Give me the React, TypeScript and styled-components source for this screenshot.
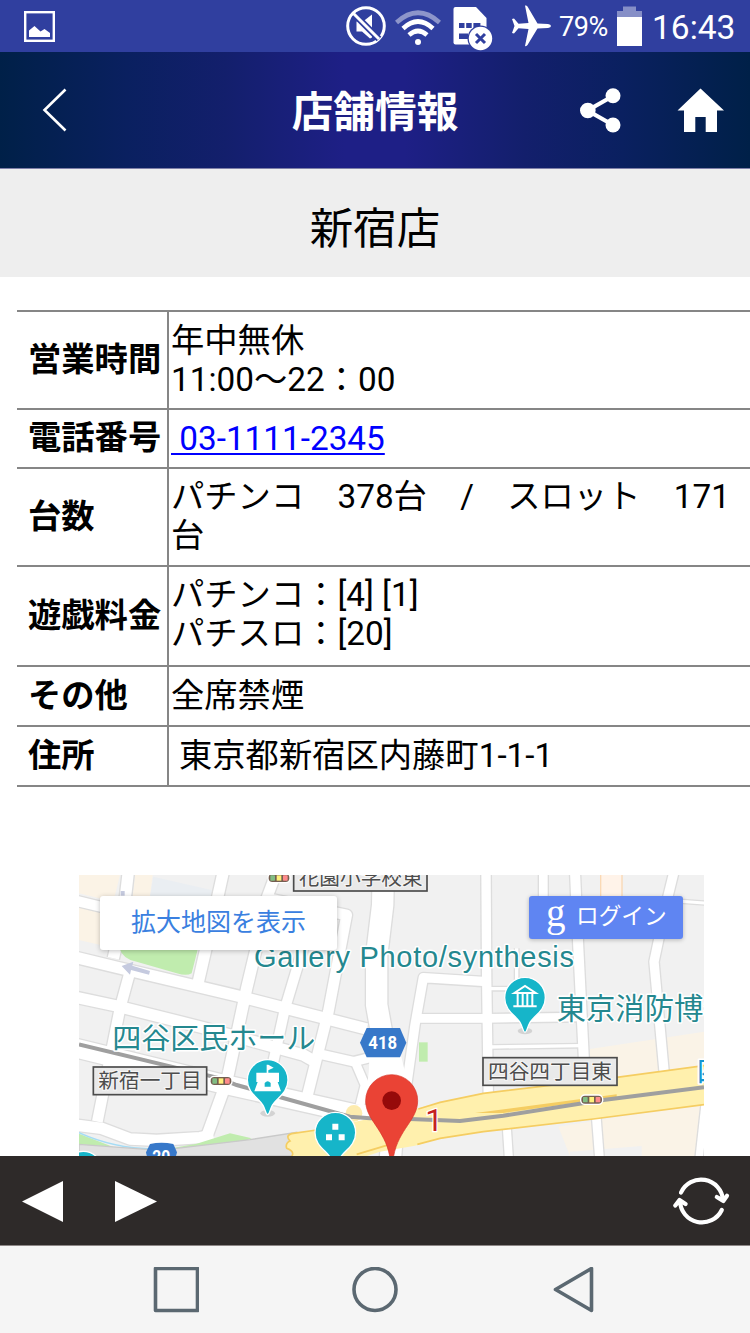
import React from 'react';
import styled, { createGlobalStyle } from 'styled-components';

const fontStack = `Roboto, "Noto Sans CJK JP", sans-serif`;

const GlobalStyle = createGlobalStyle`
  * { box-sizing: border-box; }
  body { margin: 0; background: #fff; font-family: ${fontStack}; color: #000; }
  svg { display: block; flex: none; }
`;

const Screen = styled.div`
  width: 750px;
  height: 1333px;
  display: flex;
  flex-direction: column;
  overflow: hidden;
  background: #fff;
`;

const StatusBar = styled.div`
  height: 52px;
  flex: none;
  display: flex;
  align-items: center;
  padding: 0 15px 0 24px;
  background: #303f9f;
  color: #fff;
`;

const StatusIcons = styled.div`
  margin-left: auto;
  height: 52px;
  display: flex;
  align-items: center;
`;

const IconSlot = styled.div<{ $left?: number; $top?: number }>`
  margin-left: ${(p) => p.$left ?? 0}px;
  padding-top: ${(p) => p.$top ?? 0}px;
`;

const Percent = styled.span`
  width: 57px;
  padding: 2px 0 0 7px;
  font-size: 27px;
  line-height: 40px;
  letter-spacing: -0.4px;
  white-space: nowrap;
`;

const Clock = styled.span`
  width: 83px;
  margin-left: 10px;
  padding-top: 4px;
  font-size: 33.5px;
  line-height: 40px;
  white-space: nowrap;
`;

const Header = styled.header`
  height: 117px;
  flex: none;
  display: grid;
  grid-template-columns: 200px 1fr 200px;
  align-items: center;
  border-bottom: 1px solid #7f80a8;
  background: linear-gradient(90deg, #002048 0%, #0a2060 17%, #131f6c 30%, #1e1f86 46%, #1e1f86 54%, #131f6c 70%, #0a2060 83%, #002048 100%);
  color: #fff;
`;

const HeaderTitle = styled.h1`
  margin: 0;
  padding-top: 5px;
  font-size: 41.7px;
  font-weight: 700;
  line-height: 60px;
  text-align: center;
  white-space: nowrap;
`;

const BackButton = styled.div`
  padding-left: 42px;
`;

const HeaderActions = styled.div`
  display: flex;
  align-items: center;
  gap: 55px;
  padding-left: 30px;
`;

const StoreName = styled.h2`
  margin: 0;
  height: 108px;
  flex: none;
  background: #eee;
  font-size: 43.5px;
  font-weight: 400;
  line-height: 121px;
  text-align: center;
`;

const Content = styled.main`
  flex: 1;
  min-height: 0;
  overflow: hidden;
`;

const InfoTable = styled.dl`
  margin: 33px 0 0 17px;
  border-top: 2px solid #868686;
  font-size: 33.3px;
  line-height: 39.5px;
`;

const InfoRow = styled.div<{ $height: number }>`
  height: ${(p) => p.$height}px;
  display: grid;
  grid-template-columns: 150px 1fr;
  border-bottom: 2px solid #868686;
`;

const Label = styled.dt`
  display: flex;
  align-items: center;
  padding: 0 0 1px 11px;
  font-weight: 700;
  white-space: nowrap;
`;

const Value = styled.dd<{ $indent?: boolean; $bottom?: number }>`
  margin: 0;
  display: flex;
  flex-direction: column;
  justify-content: center;
  border-left: 2px solid #868686;
  padding-left: ${(p) => (p.$indent ? 10 : 2)}px;
  padding-bottom: ${(p) => p.$bottom ?? 0}px;
  white-space: pre;
`;

const PhoneLink = styled.a`
  align-self: flex-start;
  color: #00f;
  text-decoration: underline;
  text-decoration-thickness: 2px;
  text-underline-offset: 3px;
`;

const MapFrame = styled.section`
  position: relative;
  width: 625px;
  height: 281px;
  margin: 88px 0 0 79px;
  overflow: hidden;
  background: #f1f1f1;
`;

const LargerMap = styled.div`
  position: absolute;
  left: 21px;
  top: 21px;
  width: 237px;
  height: 54px;
  border-radius: 3px;
  background: #fff;
  box-shadow: 0 1px 5px rgba(0, 0, 0, 0.25);
  color: #3a80e0;
  font-size: 25px;
  line-height: 54px;
  text-align: center;
`;

const Login = styled.div`
  position: absolute;
  left: 450px;
  top: 21px;
  width: 154px;
  height: 43px;
  display: flex;
  padding-left: 17px;
  border-radius: 3px;
  background: #5f85f2;
  box-shadow: 0 1px 4px rgba(0, 0, 0, 0.25);
  color: #fff;
  font-size: 22.7px;
  line-height: 42px;
`;

const GoogleMark = styled.span`
  width: 30px;
  font-family: "Liberation Serif", serif;
  font-size: 39px;
  line-height: 34px;
`;

const Toolbar = styled.div`
  height: 89px;
  flex: none;
  display: flex;
  align-items: center;
  padding: 1px 20px 0 22px;
  background: #2e2a29;
`;

const Forward = styled.div`
  margin-left: 52px;
  margin-right: auto;
`;

const NavBar = styled.nav`
  height: 88px;
  flex: none;
  display: flex;
  justify-content: center;
  align-items: center;
  gap: 153px;
  border-top: 1px solid #8d8786;
  background: #f5f5f5;
`;

const rows = [
  { label: '営業時間', height: 98, lines: ['年中無休', '11:00〜22：00'] },
  { label: '電話番号', height: 59, lines: [' 03-1111-2345'], link: true },
  { label: '台数', height: 98, lines: ['パチンコ　378台　/　スロット　171', '台'], bottom: 2 },
  { label: '遊戯料金', height: 100, lines: ['パチンコ：[4] [1]', 'パチスロ：[20]'], bottom: 4 },
  { label: 'その他', height: 60, lines: ['全席禁煙'], bottom: 1 },
  { label: '住所', height: 60, lines: ['東京都新宿区内藤町1-1-1'], indent: true, bottom: 1 },
];

const PictureIcon = () => (
  <svg width="31" height="31" viewBox="0 0 31 31">
    <rect x="1.2" y="1.2" width="28.6" height="28.6" fill="none" stroke="#fff" strokeWidth="2.4" />
    <path d="M5 26V19.5L10.5 15L16.5 20.5L20.5 18L26 22V26Z" fill="#fff" />
  </svg>
);

const MuteIcon = () => (
  <svg width="40" height="40" viewBox="0 0 40 40">
    <circle cx="20" cy="20" r="18.3" fill="none" stroke="#fff" strokeWidth="3" />
    <path d="M10.500 15.500H17L26 8.500V31.500L24 32.500L16 25.500H10.500Z" fill="#fff" />
    <path d="M8.500 8.500L33 33" stroke="#303f9f" strokeWidth="6.500" />
    <path d="M7 7L33 33" stroke="#fff" strokeWidth="3" />
  </svg>
);

const WifiIcon = () => (
  <svg width="46" height="36" viewBox="0 0 46 36" fill="none" stroke="#fff" strokeWidth="4.600">
    <path d="M1.500 12.500Q23 -7 44.500 12.500" opacity="0.45" />
    <path d="M8 18.500Q23 4.500 38 18.500" />
    <path d="M14 25Q23 17 32 25" />
    <circle cx="23" cy="32" r="3" fill="#fff" stroke="none" />
  </svg>
);

const SimIcon = () => (
  <svg width="40" height="46" viewBox="0 0 40 46">
    <path d="M2.500 1H23L33.500 12V38.500H2.500Q0.500 38.500 0.500 36.500V3Q0.500 1 2.500 1Z" fill="#fff" />
    <g fill="#303f9f">
      <rect x="6" y="17" width="5.500" height="5" />
      <rect x="13.200" y="17" width="5.500" height="5" />
      <rect x="20.400" y="17" width="7" height="5" />
      <rect x="6" y="24" width="13" height="2" opacity="0" />
      <rect x="6" y="27.500" width="9" height="5.500" />
    </g>
    <circle cx="27.500" cy="32.500" r="13" fill="#303f9f" />
    <circle cx="27.500" cy="32.500" r="11.700" fill="#fff" />
    <path d="M23 28L32 37M32 28L23 37" stroke="#303f9f" strokeWidth="3" />
  </svg>
);

const PlaneIcon = () => (
  <svg width="40" height="42" viewBox="0 0 40 42">
    <path d="M13 0.500Q14.500 0 15.500 1.500L25.500 18.500L36 19Q39 19.500 39 21Q39 22.500 36 23L25.500 23.500L15.500 40Q14.500 41.500 13 41L16.500 24L6.500 23.200L2 28.500L0 28L2.500 21L0 14L2 13.500L6.500 18.800L16.500 18Z" fill="#fff" />
  </svg>
);

const BatteryIcon = () => (
  <svg width="25" height="40" viewBox="0 0 25 40">
    <path d="M0 11V5H6V0.500H19V5H25V11Z" fill="#fff" opacity="0.42" />
    <rect y="11" width="25" height="29" fill="#fff" />
  </svg>
);

const BackIcon = () => (
  <svg width="26" height="44" viewBox="0 0 26 44">
    <path d="M23.500 1.500L2.500 22L23.500 42.500" fill="none" stroke="#fff" strokeWidth="2.600" />
  </svg>
);

const ShareIcon = () => (
  <svg width="41" height="45" viewBox="0 0 41 45">
    <path d="M33 8L7.500 22.500L33 37" fill="none" stroke="#fff" strokeWidth="4.200" />
    <g fill="#fff">
      <circle cx="33" cy="7.800" r="7.500" />
      <circle cx="7.800" cy="22.500" r="7.800" />
      <circle cx="33" cy="37" r="7.500" />
    </g>
  </svg>
);

const HomeIcon = () => (
  <svg width="48" height="45" viewBox="0 0 48 45">
    <path d="M24.500 0.500L48 22.500H41V44H29.700V29H19.300V44H8V22.500H1.500Z" fill="#fff" />
  </svg>
);

const ReloadIcon = () => (
  <svg width="57" height="50" viewBox="0 0 57 50" fill="none" stroke="#fff" strokeWidth="4.200" strokeLinecap="round" strokeLinejoin="round">
    <path d="M8 16.500A22 22 0 0 1 50 24" />
    <path d="M43.800 21L50.300 25L54 19.800" fill="#fff" />
    <path d="M48.800 34A22 22 0 0 1 7 25" />
    <path d="M2.300 29.500L6.500 24L12.500 28" fill="#fff" />
  </svg>
);

const roads: { d: string; w: number }[] = [
  { d: 'M0 103L75 121L240 160L500 225L580 245', w: 30 },
  { d: 'M0 273L140 307L500 392L890 492', w: 34 },
  { d: 'M0 393L140 423L400 488L700 570L735 590', w: 34 },
  { d: 'M0 545L450 655L850 745L990 757', w: 56 },
  { d: 'M0 778L95 790L180 822L260 826L390 818L430 810', w: 34 },
  { d: 'M175 20L160 150L130 280', w: 34 },
  { d: 'M460 20L440 110L385 350', w: 34 },
  { d: 'M180 320L150 430L82 770', w: 32 },
  { d: 'M590 120L530 370L470 650L410 815', w: 34 },
  { d: 'M720 180L645 430L610 590L590 650', w: 30 },
  { d: 'M620 20L590 100L830 150L775 440L710 700', w: 32 },
  { d: 'M940 20L938 120L920 270L920 420L945 560L970 760L960 900', w: 64 },
  { d: 'M740 565L850 590L910 575', w: 28 },
  { d: 'M855 590L885 660L870 720', w: 26 },
  { d: 'M1248 20L1250 340L1255 700', w: 28 },
  { d: 'M1420 20V120', w: 26 },
  { d: 'M1515 20L1525 250L1545 650', w: 30 },
  { d: 'M1812 20L1790 110L1752 290L1785 650', w: 28 },
  { d: 'M1250 350L1060 338L1035 480L1010 660L990 740', w: 28 },
  { d: 'M1035 460H1245L1540 456', w: 26 },
  { d: 'M1260 371H1360M1340 250V380', w: 10 },
  { d: 'M1260 546L1530 542', w: 10 },
  { d: 'M1780 105L1930 116', w: 9 },
  { d: 'M1310 780L1318 900', w: 24 },
  { d: 'M1578 745L1590 900', w: 26 },
  { d: 'M1905 720L1885 900', w: 22 },
];

const Pin = ({ x, y, children }: { x: number; y: number; children?: React.ReactNode }) => (
  <g transform={`translate(${x} ${y})`}>
    <ellipse cx="0" cy="100" rx="22" ry="10" fill="#000" opacity="0.12" />
    <path d="M0 104C-6 104 -6 90 -14 76C-26 54 -61 40 -61 0A61 61 0 0 1 61 0C61 40 26 54 14 76C6 90 6 104 0 104Z" fill="#16b5c9" stroke="#fff" strokeWidth="4" />
    {children}
  </g>
);

const TrafficLight = ({ x, y }: { x: number; y: number }) => (
  <g transform={`translate(${x} ${y})`}>
    <rect x="-35" y="-16" width="70" height="32" rx="14" fill="#fff" />
    <rect x="-31" y="-12" width="62" height="24" rx="11" fill="#755f51" />
    <rect x="-26" y="-8" width="14" height="16" rx="2" fill="#81bd83" />
    <rect x="-7" y="-8" width="14" height="16" fill="#fff17c" />
    <rect x="12" y="-8" width="14" height="16" rx="2" fill="#ff8b8b" />
  </g>
);

const MapSign = ({ x, y, w, text }: { x: number; y: number; w: number; text: string }) => (
  <g>
    <rect x={x} y={y} width={w} height="83" fill="#e9e9e9" stroke="#4b4b4b" strokeWidth="5" />
    <text x={x + 15} y={y + 64} fontSize="62" fill="#4d4d4d" stroke="#f6f6f6" strokeWidth="6" paintOrder="stroke">{text}</text>
  </g>
);

const MapDrawing = () => (
  <svg width="625" height="281" viewBox="27 30 1875 843" fontFamily={`"Noto Sans CJK JP", sans-serif`}>
    <rect x="27" y="30" width="1875" height="843" fill="#f1f1f1" />
    <path d="M27 30H150L130 110L27 85ZM27 125L92 140V240L27 225ZM195 30H248L240 95H188Z" fill="#fbf3e6" />
    <path d="M250 35L425 75V95H240Z" fill="#eaeef2" />
    <path d="M1560 552L1902 500V610L1560 660Z" fill="#faf3e7" />
    <path d="M1465 785L1902 715V873H1500Z" fill="#faf3e7" />
    <path d="M1500 860L1715 843V873H1500Z" fill="#f1f1f1" />
    <rect x="1592" y="25" width="64" height="70" fill="#fff3e9" stroke="#fad9b5" strokeWidth="4" />
    <rect x="1047" y="532" width="26" height="58" fill="#c0ecae" />
    <g fill="none" stroke="#dddddd" strokeLinejoin="round">
      {roads.map((r) => <path key={r.d} d={r.d} strokeWidth={r.w + 8} />)}
    </g>
    <g fill="none" stroke="#fff" strokeLinejoin="round">
      {roads.map((r) => <path key={r.d} d={r.d} strokeWidth={r.w} />)}
    </g>
    <path d="M148 250H384L365 325Q350 334 320 325L200 290Q160 285 148 250Z" fill="#c0ecae" />
    <path d="M890 500Q905 600 890 660L930 760H1020L1010 640L990 560Z" fill="#fff" />
    <path d="M27 806L130 846L270 856L380 836L480 805L545 820L400 873H27Z" fill="#c0ecae" />
    <path d="M27 803Q130 850 250 852" fill="none" stroke="#a5dcf5" strokeWidth="5" />
    <path d="M27 838L270 856L540 824L680 802V873H27Z" fill="#e1e1e1" stroke="#c9c9c9" strokeWidth="4" />
    <path d="M665 806L740 795L880 765L990 745L1110 712L1240 685L1640 637L1910 601V718L1570 762L1240 800L1110 820L1035 842L930 860L870 880H660Q680 862 650 850Q645 835 660 828Q645 812 665 806Z" fill="#fff0ad" />
    <path d="M1910 601L1640 637L1240 685L1110 712L1045 732M1910 718L1570 762L1240 800L1110 820L1042 838M740 795L665 806Q645 812 660 828Q645 835 650 850Q680 862 660 880" fill="none" stroke="#f5cd62" strokeWidth="5" />
    <path d="M1215 744L1640 688V697L1300 744Z" fill="#f5cd62" />
    <path d="M860 868L960 838" stroke="#f5cd62" strokeWidth="6" />
    <circle cx="852" cy="745" r="25" fill="#fdebae" />
    <path d="M27 538L450 640L500 660L840 755L900 760L1020 762L1170 768L1300 752L1600 705L1902 667" fill="none" stroke="#9f9f9f" strokeWidth="12" />
    <path d="M155 303L190 290L187 302L240 318L237 329L183 315L180 329Z" fill="#c5cadf" />
    <rect x="152" y="78" width="12" height="14" fill="#c5cadf" />

    <g fill="#24888f" stroke="#fff" strokeWidth="9" strokeLinejoin="round" paintOrder="stroke">
      <text x="552" y="306" fontSize="87" fontFamily={`"Liberation Sans", sans-serif`} textLength="960" lengthAdjust="spacing">Gallery Photo/synthesis</text>
      <text x="127" y="553" fontSize="87">四谷区民ホール</text>
      <text x="1460" y="463" fontSize="88">東京消防博物館</text>
      <text x="1880" y="652" fontSize="87" fill="#1596d1">四</text>
    </g>

    <MapSign x={671} y={-5} w={400} text="花園小学校東" />
    <MapSign x={70} y={606} w={340} text="新宿一丁目" />
    <MapSign x={1239} y={578} w={402} text="四谷四丁目東" />
    <TrafficLight x={627} y={39} />
    <TrafficLight x={453} y={648} />
    <TrafficLight x={1565} y={704} />

    <path d="M890 489H990L1009 533L990 577H890L870 533Z" fill="#3778c9" />
    <g fontFamily="Roboto, sans-serif" fontWeight="700" fill="#fff" textAnchor="middle">
      <text x="938" y="551" fontSize="57" textLength="86" lengthAdjust="spacingAndGlyphs">418</text>
      <path d="M240 837Q274 830 310 837L321 862Q318 880 300 900H250Q230 880 228 862Z" fill="#3778c9" />
      <text x="274" y="893" fontSize="57" textLength="54" lengthAdjust="spacingAndGlyphs">20</text>
    </g>

    <circle cx="40" cy="915" r="56" fill="#16b5c9" stroke="#fff" strokeWidth="4" />
    <Pin x={593} y={645}>
      <path d="M-3 -46H2L18 -37L2 -29V-22H34V6H30L40 34H-40L-30 6H-34V-22H-3Z" fill="#fff" />
      <path d="M-9 20V9Q0 -2 9 9V20Z" fill="#16b5c9" />
    </Pin>
    <Pin x={796} y={803}>
      <path d="M-9 -27H9V-9H-9ZM-28 5H-10V23H-28ZM10 5H28V23H10Z" fill="#fff" />
    </Pin>
    <Pin x={1365} y={398}>
      <path d="M-32 -14L0 -35L32 -14ZM-22 -12V26M-7 -12V26M7 -12V26M22 -12V26M-35 26H35" fill="none" stroke="#fff" strokeWidth="6" />
    </Pin>
    <path d="M965 629A78 78 0 0 1 1043 707C1043 765 986 792 971 873L969 890H961L959 873C944 792 887 765 887 707A78 78 0 0 1 965 629Z" fill="#ea4335" stroke="#d83529" strokeWidth="2" />
    <circle cx="965" cy="707" r="28" fill="#960a0a" />
    <text x="1066" y="799" fontSize="94" fontFamily="Roboto, sans-serif" fill="#c5221f" stroke="#fff" strokeWidth="7" paintOrder="stroke">1</text>
  </svg>
);

export default function App() {
  return (
    <Screen>
      <GlobalStyle />
      <StatusBar>
        <PictureIcon />
        <StatusIcons>
          <MuteIcon />
          <IconSlot $left={9} $top={4}><WifiIcon /></IconSlot>
          <IconSlot $left={12} $top={5}><SimIcon /></IconSlot>
          <IconSlot $left={19}><PlaneIcon /></IconSlot>
          <Percent>79%</Percent>
          <IconSlot $left={8}><BatteryIcon /></IconSlot>
          <Clock>16:43</Clock>
        </StatusIcons>
      </StatusBar>
      <Header>
        <BackButton><BackIcon /></BackButton>
        <HeaderTitle>店舗情報</HeaderTitle>
        <HeaderActions>
          <ShareIcon />
          <HomeIcon />
        </HeaderActions>
      </Header>
      <StoreName>新宿店</StoreName>
      <Content>
        <InfoTable>
          {rows.map((row) => (
            <InfoRow key={row.label} $height={row.height}>
              <Label>{row.label}</Label>
              <Value $indent={row.indent} $bottom={row.bottom}>
                {row.lines.map((line) =>
                  row.link ? <PhoneLink key={line}>{line}</PhoneLink> : <span key={line}>{line}</span>
                )}
              </Value>
            </InfoRow>
          ))}
        </InfoTable>
        <MapFrame>
          <MapDrawing />
          <LargerMap>拡大地図を表示</LargerMap>
          <Login>
            <GoogleMark>g</GoogleMark>
            ログイン
          </Login>
        </MapFrame>
      </Content>
      <Toolbar>
        <svg width="41" height="41" viewBox="0 0 41 41"><path d="M0 20.500L41 0V41Z" fill="#fff" /></svg>
        <Forward>
          <svg width="42" height="41" viewBox="0 0 42 41"><path d="M0 0L42 20.500L0 41Z" fill="#fff" /></svg>
        </Forward>
        <ReloadIcon />
      </Toolbar>
      <NavBar>
        <svg width="46" height="46" viewBox="0 0 46 46" fill="none" stroke="#5b6871" strokeWidth="3.600" strokeLinejoin="round">
          <rect x="2.500" y="1.500" width="42" height="42" />
        </svg>
        <svg width="46" height="46" viewBox="0 0 46 46" fill="none" stroke="#5b6871" strokeWidth="3.600">
          <circle cx="23" cy="22.500" r="21" />
        </svg>
        <svg width="46" height="46" viewBox="0 0 46 46" fill="none" stroke="#5b6871" strokeWidth="3.600" strokeLinejoin="round">
          <path d="M40.500 1.500V43.500L4.500 22.500Z" />
        </svg>
      </NavBar>
    </Screen>
  );
}
